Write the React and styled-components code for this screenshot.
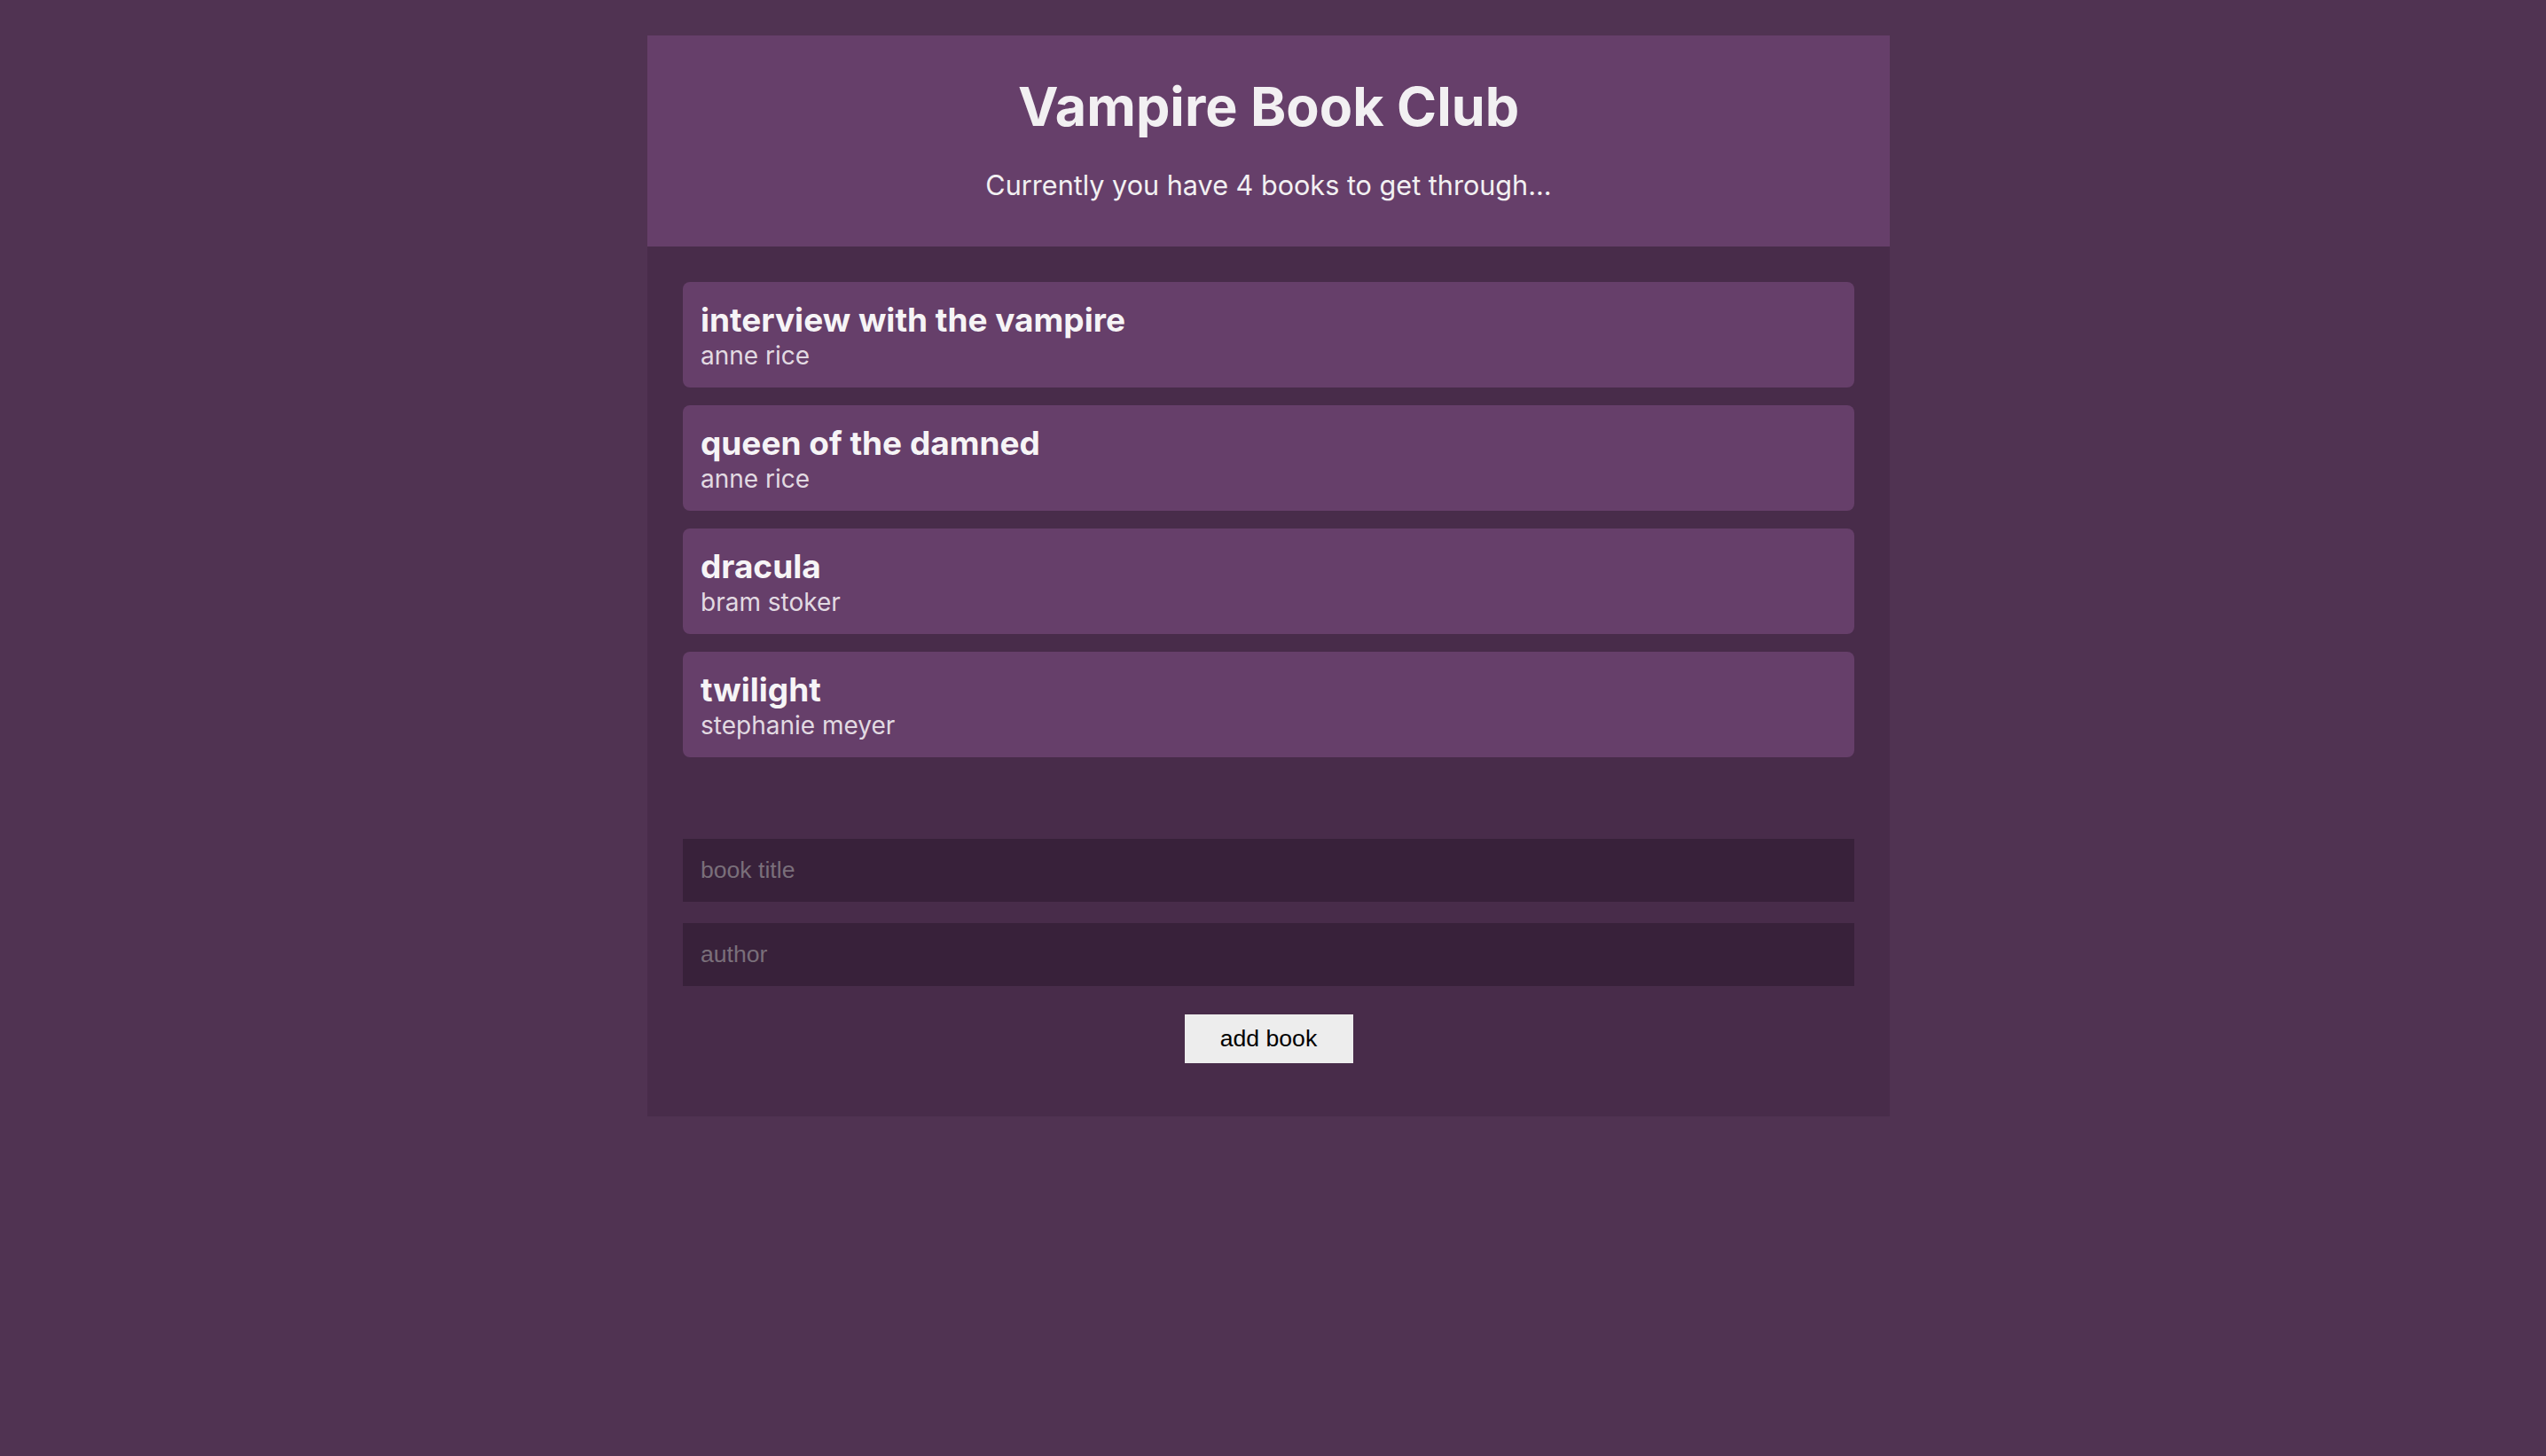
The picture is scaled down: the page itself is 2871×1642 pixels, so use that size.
import { useState } from "react";
import styled, { createGlobalStyle } from "styled-components";

const GlobalStyle = createGlobalStyle`
  * {
    box-sizing: border-box;
  }

  body {
    margin: 0;
    background: #503352;
    font-family: Inter, "Noto Sans", sans-serif;
    color: #f0eef0;
  }
`;

const Page = styled.div`
  display: flex;
  justify-content: center;
  padding: 40px 10px 40px 0;
  min-height: 100vh;
`;

const Wrapper = styled.div`
  width: 1401px;
  display: flex;
  flex-direction: column;
  align-self: flex-start;
`;

const Header = styled.header`
  background: #663f6a;
  height: 238px;
  padding: 43px 40px 0;
  display: flex;
  flex-direction: column;
  align-items: center;
  gap: 33px;
`;

const Title = styled.h1`
  margin: 0;
  font-size: 61px;
  font-weight: 700;
  color: #f2f0f2;
  line-height: 74px;
`;

const Subtitle = styled.p`
  margin: 0;
  font-size: 30.6px;
  font-weight: 400;
  line-height: 37px;
  color: #f2f0f2;
`;

const Body = styled.main`
  background: #482c4a;
  padding: 40px 40px 60px;
  display: flex;
  flex-direction: column;
`;

const BookList = styled.ul`
  list-style: none;
  margin: 0;
  padding: 0;
  display: flex;
  flex-direction: column;
  gap: 20px;
`;

const BookCard = styled.li`
  background: #663f6a;
  border-radius: 8px;
  padding: 21px 20px 0;
  height: 119px;
  display: flex;
  flex-direction: column;
`;

const BookTitle = styled.h3`
  margin: 0;
  font-size: 37px;
  font-weight: 700;
  line-height: 44px;
  color: #f6f4f6;
`;

const BookAuthor = styled.p`
  margin: 0;
  font-size: 28px;
  line-height: 36px;
  color: #e2dae2;
`;

const Form = styled.form`
  margin-top: 92px;
  display: flex;
  flex-direction: column;
  align-items: center;
  gap: 24px;
`;

const Input = styled.input`
  width: 100%;
  height: 71px;
  padding: 0 20px;
  border: none;
  outline: none;
  background: #38213a;
  color: #f0eef0;
  font-family: "Liberation Sans", Arial, sans-serif;
  font-size: 26.6px;

  &::placeholder {
    color: #7a6f7a;
  }
`;

const Button = styled.button`
  margin-top: 8px;
  width: 190px;
  height: 55px;
  border: none;
  background: #ededed;
  color: #000;
  font-family: "Liberation Sans", Arial, sans-serif;
  font-size: 26.6px;
  cursor: pointer;
`;

const initialBooks = [
  { title: "interview with the vampire", author: "anne rice" },
  { title: "queen of the damned", author: "anne rice" },
  { title: "dracula", author: "bram stoker" },
  { title: "twilight", author: "stephanie meyer" },
];

export default function App() {
  const [books, setBooks] = useState(initialBooks);
  const [title, setTitle] = useState("");
  const [author, setAuthor] = useState("");

  const addBook = (e) => {
    e.preventDefault();
    if (!title || !author) return;
    setBooks([...books, { title, author }]);
    setTitle("");
    setAuthor("");
  };

  return (
    <>
      <GlobalStyle />
      <Page>
        <Wrapper>
          <Header>
            <Title>Vampire Book Club</Title>
            <Subtitle>Currently you have {books.length} books to get through...</Subtitle>
          </Header>
          <Body>
            <BookList>
              {books.map((book, i) => (
                <BookCard key={i}>
                  <BookTitle>{book.title}</BookTitle>
                  <BookAuthor>{book.author}</BookAuthor>
                </BookCard>
              ))}
            </BookList>
            <Form onSubmit={addBook}>
              <Input
                type="text"
                placeholder="book title"
                value={title}
                onChange={(e) => setTitle(e.target.value)}
              />
              <Input
                type="text"
                placeholder="author"
                value={author}
                onChange={(e) => setAuthor(e.target.value)}
              />
              <Button type="submit">add book</Button>
            </Form>
          </Body>
        </Wrapper>
      </Page>
    </>
  );
}
